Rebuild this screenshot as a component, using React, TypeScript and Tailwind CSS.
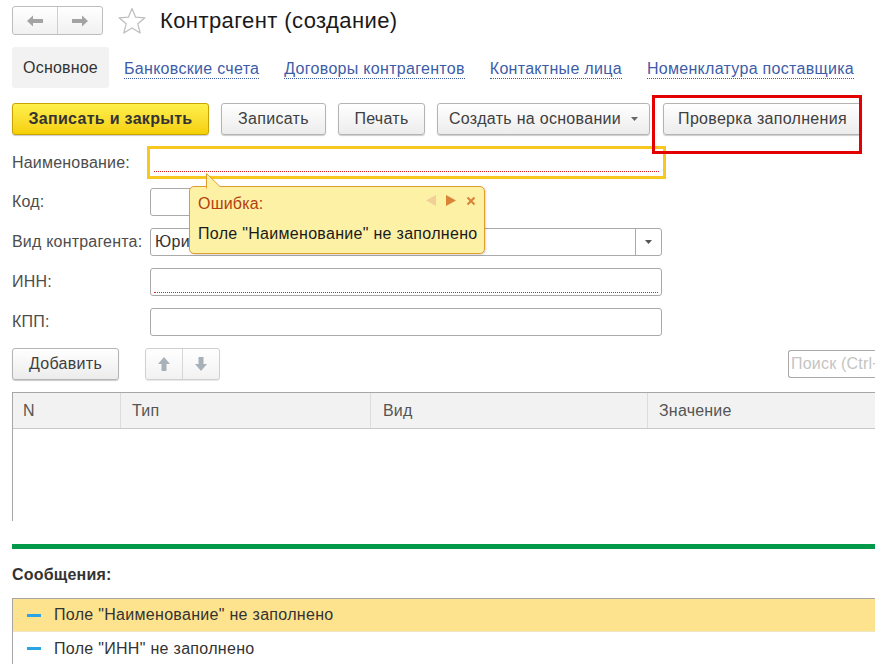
import React from 'react';

const font = { fontFamily: '"Liberation Sans", Arial, sans-serif' };

function Btn({ w, children, className = '' }: { w: string; children: React.ReactNode; className?: string }) {
  return (
    <div
      className={`${w} h-[32px] flex items-center justify-center rounded-[3px] border border-[#b4b4b4] bg-gradient-to-b from-white to-[#ececec] shadow-[0_1px_1px_rgba(0,0,0,0.2)] text-[16px] tracking-[0.3px] text-[#404040] whitespace-nowrap ${className}`}
    >
      {children}
    </div>
  );
}

function TabLink({ children }: { children: React.ReactNode }) {
  return (
    <span className="text-[16px] tracking-[0.3px] text-[#3d5da8] leading-[19px] border-b border-dotted border-[#3d5da8] whitespace-nowrap">
      {children}
    </span>
  );
}

function Field({ label, children }: { label: string; children: React.ReactNode }) {
  return (
    <div className="flex items-center h-[28px] mb-[12px]">
      <div className="w-[138px] text-[16px] tracking-[0.2px] text-[#4d4d4d] whitespace-nowrap">{label}</div>
      {children}
    </div>
  );
}

export default function App() {
  return (
    <div className="relative w-[875px] h-[664px] overflow-hidden bg-white" style={font}>
      {/* Header */}
      <div className="flex items-center pt-[4px] pl-[12px] h-[33px] box-content">
        <div className="flex w-[91px] h-[29px] rounded-[3px] border border-[#bdbdbd] bg-gradient-to-b from-white to-[#f1f1f1]">
          <div className="flex-1 flex items-center justify-center border-r border-[#cfcfcf]">
            <svg width="18" height="14" viewBox="0 0 18 14">
              <path d="M1 7 L7 1.5 L7 5 L17 5 L17 9 L7 9 L7 12.5 Z" fill="#a3a3a3" />
            </svg>
          </div>
          <div className="flex-1 flex items-center justify-center">
            <svg width="18" height="14" viewBox="0 0 18 14">
              <path d="M17 7 L11 1.5 L11 5 L1 5 L1 9 L11 9 L11 12.5 Z" fill="#a3a3a3" />
            </svg>
          </div>
        </div>
        <svg className="ml-[14px]" width="30" height="28" viewBox="0 0 30 28">
          <path
            d="M15 1.5 L18.6 10.2 L28 10.8 L20.8 16.8 L23.2 26 L15 21 L6.8 26 L9.2 16.8 L2 10.8 L11.4 10.2 Z"
            fill="none"
            stroke="#bdbdbd"
            strokeWidth="1.2"
            strokeLinejoin="round"
          />
        </svg>
        <div className="ml-[13px] text-[22px] tracking-[0.4px] text-[#1a1a1a] leading-none">Контрагент (создание)</div>
      </div>

      {/* Tabs */}
      <div className="flex items-center mt-[10px] ml-[12px] h-[41px]">
        <div className="w-[97px] h-[41px] flex items-center justify-center bg-[#f2f2f2] rounded-[3px] text-[16px] tracking-[0.2px] text-[#333]">
          Основное
        </div>
        <div className="flex items-center ml-[15px] gap-[25px] pt-[2px]">
          <TabLink>Банковские счета</TabLink>
          <TabLink>Договоры контрагентов</TabLink>
          <TabLink>Контактные лица</TabLink>
          <TabLink>Номенклатура поставщика</TabLink>
        </div>
      </div>

      {/* Toolbar */}
      <div className="flex items-center mt-[15px] ml-[12px] gap-[12px]">
        <div className="w-[197px] h-[32px] flex items-center justify-center rounded-[3px] border border-[#c9a400] bg-gradient-to-b from-[#fff04a] to-[#f5cf00] shadow-[0_1px_1px_rgba(0,0,0,0.2)] text-[16px] tracking-[0.3px] font-bold text-[#333] whitespace-nowrap">
          Записать и закрыть
        </div>
        <Btn w="w-[105px]">Записать</Btn>
        <Btn w="w-[87px]">Печать</Btn>
        <Btn w="w-[213px]">
          Создать на основании
          <svg className="ml-[10px]" width="7" height="4" viewBox="0 0 7 4">
            <path d="M0 0 L7 0 L3.5 4 Z" fill="#666" />
          </svg>
        </Btn>
        <Btn w="w-[199px]" className="ml-[1px]">Проверка заполнения</Btn>
      </div>

      {/* Form */}
      <div className="mt-[11px] ml-[12px]">
        <div className="flex items-center h-[33px] mb-[9px]">
          <div className="w-[135px] text-[16px] tracking-[0.2px] text-[#4d4d4d] whitespace-nowrap">Наименование:</div>
          <div className="w-[519px] h-[33px] border-[3px] border-[#f8c820] bg-white flex items-end px-[4px] pb-[4px]">
            <div className="w-full border-b border-dotted border-[#e02020]" />
          </div>
        </div>
        <Field label="Код:">
          <div className="w-[200px] h-[28px] rounded-[3px] border border-[#a9a9a9] bg-white" />
        </Field>
        <Field label="Вид контрагента:">
          <div className="w-[512px] h-[28px] rounded-[3px] border border-[#a9a9a9] bg-white flex">
            <div className="flex-1 flex items-center pl-[4px] text-[16px] tracking-[0.3px] text-[#333] whitespace-nowrap">Юридическое лицо</div>
            <div className="w-[26px] border-l border-[#a9a9a9] flex items-center justify-center">
              <svg width="7" height="4" viewBox="0 0 7 4">
                <path d="M0 0 L7 0 L3.5 4 Z" fill="#555" />
              </svg>
            </div>
          </div>
        </Field>
        <Field label="ИНН:">
          <div className="w-[512px] h-[28px] rounded-[3px] border border-[#a9a9a9] bg-white flex items-end px-[3px] pb-[2px]">
            <div className="w-full border-b border-dotted border-[#e02020]" />
          </div>
        </Field>
        <Field label="КПП:">
          <div className="w-[512px] h-[28px] rounded-[3px] border border-[#a9a9a9] bg-white" />
        </Field>
      </div>

      {/* Table toolbar */}
      <div className="flex items-center ml-[12px] h-[32px]">
        <Btn w="w-[107px]">Добавить</Btn>
        <div className="ml-[26px] flex w-[75px] h-[32px] rounded-[3px] border border-[#d0d0d0] bg-gradient-to-b from-white to-[#f2f2f2] shadow-[0_1px_1px_rgba(0,0,0,0.1)]">
          <div className="flex-1 flex items-center justify-center border-r border-[#d6d6d6]">
            <svg width="14" height="16" viewBox="0 0 14 16">
              <path d="M7 1 L13 8 L9.5 8 L9.5 15 L4.5 15 L4.5 8 L1 8 Z" fill="#a9b1b8" />
            </svg>
          </div>
          <div className="flex-1 flex items-center justify-center">
            <svg width="14" height="16" viewBox="0 0 14 16">
              <path d="M7 15 L13 8 L9.5 8 L9.5 1 L4.5 1 L4.5 8 L1 8 Z" fill="#a9b1b8" />
            </svg>
          </div>
        </div>
        <div className="ml-auto w-[87px] h-[28px] rounded-l-[3px] border border-r-0 border-[#a9a9a9] flex items-center pl-[2px] text-[16px] tracking-[0.2px] text-[#c4c4c4] whitespace-nowrap overflow-hidden">
          Поиск (Ctrl+F)
        </div>
      </div>

      {/* Table */}
      <div className="mt-[12px] ml-[12px] h-[129px] border-l border-t border-[#a6a6a6]">
        <div className="flex h-[36px] bg-[#f2f2f2] border-b border-[#c8c8c8] text-[16px] tracking-[0.2px] text-[#555]">
          <div className="w-[108px] flex items-center pl-[10px] border-r border-[#dcdcdc]">N</div>
          <div className="w-[250px] flex items-center pl-[11px] border-r border-[#dcdcdc]">Тип</div>
          <div className="w-[277px] flex items-center pl-[12px] border-r border-[#dcdcdc]">Вид</div>
          <div className="flex-1 flex items-center pl-[11px]">Значение</div>
        </div>
      </div>

      {/* Messages */}
      <div className="mt-[23px] ml-[12px] h-[5px] bg-[#03994a]" />
      <div className="ml-[12px] mt-[14px] text-[16px] tracking-[0.2px] font-bold text-[#333]">Сообщения:</div>
      <div className="ml-[12px] mt-[11px] border-l border-t border-[#a6a6a6]">
        <div className="flex items-center h-[33px] bg-[#fde38e] border-b border-[#efe6c4] text-[16px] tracking-[0.3px] text-[#333]">
          <div className="ml-[14px] w-[14px] h-[3px] bg-[#2aa4e4]" />
          <span className="ml-[13px]">Поле "Наименование" не заполнено</span>
        </div>
        <div className="flex items-center h-[33px] text-[16px] tracking-[0.3px] text-[#333]">
          <div className="ml-[14px] w-[14px] h-[3px] bg-[#2aa4e4]" />
          <span className="ml-[13px]">Поле "ИНН" не заполнено</span>
        </div>
      </div>

      {/* Error tooltip */}
      <div className="absolute left-[189px] top-[186px] w-[296px] h-[68px] rounded-[5px] border border-[#e09c2c] bg-[#fdf1a6] shadow-[1px_1px_2px_rgba(0,0,0,0.15)]">
        <svg className="absolute left-[16px] top-[-14px]" width="18" height="16" viewBox="0 0 18 16">
          <path d="M0.5 15.5 L0.5 0.5 L15.5 15" fill="#fdf1a6" stroke="#e09c2c" strokeWidth="1" />
          <rect x="1" y="14" width="16" height="3" fill="#fdf1a6" />
        </svg>
        <div className="absolute left-[8px] top-[5px] text-[16px] tracking-[0.2px] text-[#b4400c]">Ошибка:</div>
        <div className="absolute right-[8px] top-[8px] flex items-center gap-[10px]">
          <svg width="10" height="11" viewBox="0 0 10 11">
            <path d="M10 0 L10 11 L0 5.5 Z" fill="#f1cf98" />
          </svg>
          <svg width="10" height="11" viewBox="0 0 10 11">
            <path d="M0 0 L0 11 L10 5.5 Z" fill="#d98336" />
          </svg>
          <svg width="10" height="10" viewBox="0 0 10 10">
            <path d="M1.5 1.5 L8.5 8.5 M8.5 1.5 L1.5 8.5" stroke="#d98336" strokeWidth="2" />
          </svg>
        </div>
        <div className="absolute left-[8px] top-[35px] text-[16px] tracking-[0.3px] text-[#1a1a1a] whitespace-nowrap">Поле "Наименование" не заполнено</div>
      </div>

      {/* Highlight box */}
      <div className="absolute left-[652px] top-[95px] w-[210px] h-[59px] border-[3px] border-[#e30000]" />
    </div>
  );
}
